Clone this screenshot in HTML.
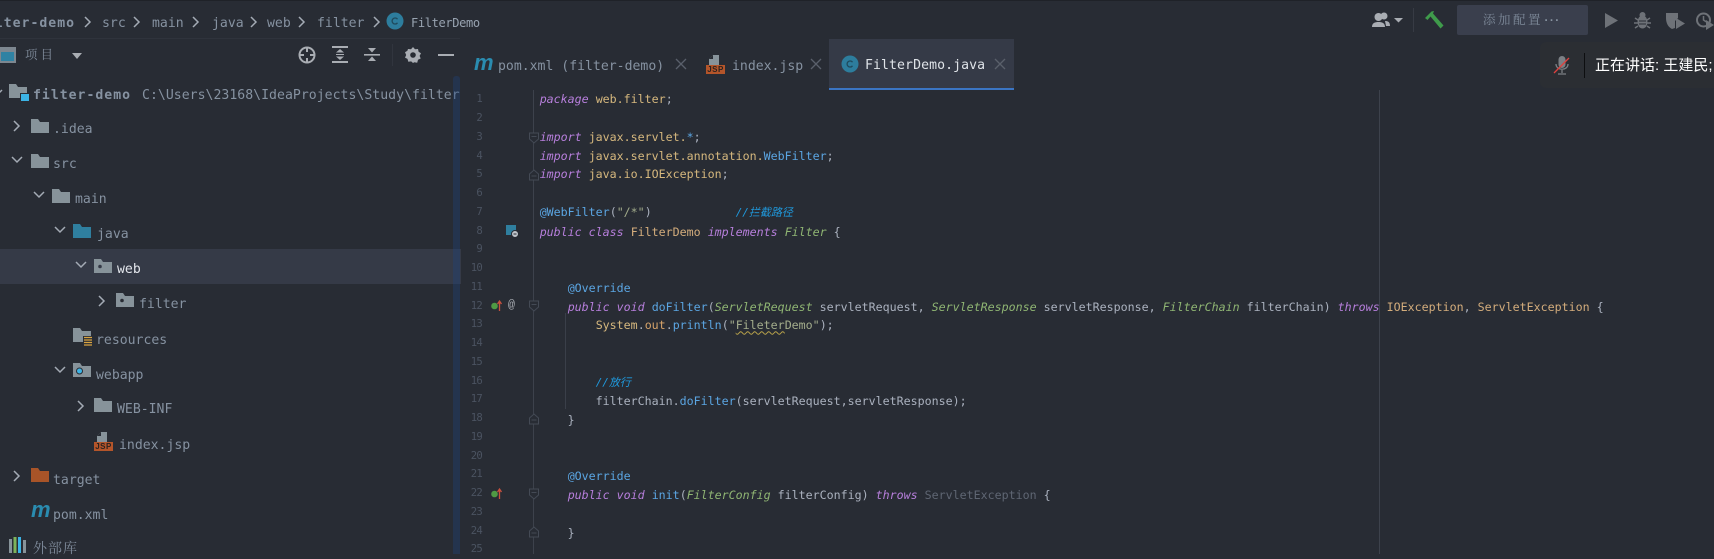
<!DOCTYPE html>
<html><head><meta charset="utf-8"><style>
html,body{margin:0;padding:0;width:1714px;height:554px;overflow:hidden;background:#282c34}
.a{position:absolute}
.t{position:absolute;font:13.15px/20px "DejaVu Sans Mono","Noto Sans CJK SC",monospace;color:#8692a1;white-space:pre}
.cn{font-family:"Noto Serif CJK SC","Noto Sans CJK SC",serif}
#code,#nums{position:absolute;top:90.3px;font:11.63px/18.75px "DejaVu Sans Mono","Noto Sans CJK SC",monospace;white-space:pre;color:#abb2bf}
#code{left:539.7px}
#nums{left:462px;width:20px;text-align:right;color:#4b5361;font-size:10.6px;letter-spacing:-.75px}
.k{color:#b77fdc;font-style:italic}.g{color:#8fb573;font-style:italic}.y{color:#d6b87e}.b{color:#5ba6e3}.o{color:#d6a36a}.c{color:#1f9ade;font-style:italic;font-size:11px}.m{color:#d4ad7c}.d{color:#5f6673}.s{color:#a3ad8c}
svg{position:absolute;overflow:visible}
</style></head><body>
<svg width="0" height="0" style="position:absolute"><defs>
<path id="f" d="M0 0h7l2 3h9v11H0z"/>
<path id="r" d="M0 0l5 5l-5 5" fill="none" stroke="#a4abb5" stroke-width="1.5"/>
<path id="dn" d="M0 0l5 5l5-5" fill="none" stroke="#a4abb5" stroke-width="1.5"/>
<g id="fs"><path d="M-4.500 -5h9v6l-4.500 4l-4.500-4z" fill="#282c34" stroke="#444a55"/><path d="M-2.500 -1.500h5" stroke="#444a55"/></g>
<g id="fe"><path d="M-4.500 5h9v-6l-4.500-4l-4.500 4z" fill="#282c34" stroke="#444a55"/><path d="M-2.500 1h5" stroke="#444a55"/></g>
</defs></svg>

<!-- top border -->
<div class="a" style="left:0;top:0;width:1714px;height:1px;background:#1f2228"></div>
<div class="a" style="left:0;top:38px;width:460px;height:1px;background:#2f333c"></div>

<!-- breadcrumb -->
<div class="t" style="left:-23px;top:14px;font-weight:bold;letter-spacing:1px">filter-demo</div>
<div class="t" style="left:102px;top:14px">src</div>
<div class="t" style="left:152px;top:14px">main</div>
<div class="t" style="left:212px;top:14px">java</div>
<div class="t" style="left:267px;top:14px">web</div>
<div class="t" style="left:317px;top:14px">filter</div>
<div class="t" style="left:411px;top:13px;color:#98a3b0;font-size:12px;letter-spacing:-.35px">FilterDemo</div>
<svg style="left:84px;top:16px" width="8" height="12"><use href="#r" x="1" y="1"/></svg>
<svg style="left:133px;top:16px" width="8" height="12"><use href="#r" x="1" y="1"/></svg>
<svg style="left:192px;top:16px" width="8" height="12"><use href="#r" x="1" y="1"/></svg>
<svg style="left:250px;top:16px" width="8" height="12"><use href="#r" x="1" y="1"/></svg>
<svg style="left:298px;top:16px" width="8" height="12"><use href="#r" x="1" y="1"/></svg>
<svg style="left:373px;top:16px" width="8" height="12"><use href="#r" x="1" y="1"/></svg>
<svg style="left:386px;top:12px" width="18" height="18"><circle cx="9" cy="9" r="8.5" fill="#2d7d9d"/><path d="M11.500 7.200A3 3 0 1 0 11.500 10.800" fill="none" stroke="#1f4a5c" stroke-width="1.300"/></svg>

<!-- project toolbar -->
<svg style="left:0;top:46px" width="18" height="18"><rect x="-3" y="1" width="19" height="16" fill="#7d8790"/><rect x="1" y="6" width="13" height="9" fill="#2f82a3"/></svg>
<div class="t cn" style="left:25px;top:44px;font-size:12.5px;letter-spacing:3px;color:#7f8b9b">项目</div>
<svg style="left:72px;top:53px" width="11" height="7"><path d="M0 0h10l-5 6z" fill="#a9adb3"/></svg>
<svg style="left:298px;top:46px" width="18" height="18" fill="none" stroke="#a9adb3" stroke-width="2"><circle cx="9" cy="9" r="7.5"/><path d="M9 1v5M9 12v5M1 9h5M12 9h5"/></svg>
<svg style="left:332px;top:46px" width="16" height="18" fill="#a9adb3"><rect x="0" y="0" width="16" height="2"/><rect x="0" y="15" width="16" height="2"/><path d="M8 3l4 3.500H4zM8 14l-4-3.500h8z"/><rect x="4" y="8" width="8" height="1"/></svg>
<svg style="left:364px;top:46px" width="16" height="18" fill="#a9adb3"><rect x="0" y="8" width="16" height="1.6"/><path d="M4 2h8L8 6.500zM8 10.500l4 4.500H4z"/></svg>
<div class="a" style="left:392px;top:44px;width:1px;height:22px;background:#31353e"></div>
<svg style="left:405px;top:47px" width="16" height="16"><path d="M8 0l2 2.300 3-.3.600 2.700 2.400 1.600-1.400 2.600 1.100 2.600-2.700 1.300-.8 2.900-2.900-.4L8 16l-1.800-1.600-2.900.4-.8-2.900L0 10.600l1.200-2.600L0 5.300l2.400-1.600L3 2l3 .3z" fill="#a9adb3"/><circle cx="8" cy="8" r="2.800" fill="#282c34"/></svg>
<div class="a" style="left:438px;top:54px;width:16px;height:2px;background:#a9adb3"></div>

<!-- selected row -->
<div class="a" style="left:0;top:249px;width:461px;height:35px;background:#353a47"></div>

<!-- tree -->
<svg style="left:-8px;top:90px" width="12" height="8"><use href="#dn" x="0" y="0"/></svg>
<svg style="left:9px;top:84px" width="20" height="18"><use href="#f" fill="#87939a"/><rect x="11" y="9" width="8" height="8" fill="#282c34"/><rect x="12" y="10" width="8" height="7" fill="#3cb4e6"/></svg>
<div class="t" style="left:33px;top:86px;font-weight:bold;letter-spacing:1px">filter-demo</div>
<div class="t" style="left:142px;top:86px;width:318px;overflow:hidden;letter-spacing:.03px">C:\Users\23168\IdeaProjects\Study\filter-demo</div>

<svg style="left:14px;top:121px" width="8" height="12"><use href="#r" y="0"/></svg>
<svg style="left:31px;top:119px" width="18" height="14"><use href="#f" fill="#87939a"/></svg>
<div class="t" style="left:53px;top:120px">.idea</div>

<svg style="left:12px;top:157px" width="12" height="8"><use href="#dn"/></svg>
<svg style="left:31px;top:154px" width="18" height="14"><use href="#f" fill="#87939a"/></svg>
<div class="t" style="left:53px;top:155px">src</div>

<svg style="left:34px;top:192px" width="12" height="8"><use href="#dn"/></svg>
<svg style="left:52px;top:189px" width="18" height="14"><use href="#f" fill="#87939a"/></svg>
<div class="t" style="left:75px;top:190px">main</div>

<svg style="left:55px;top:227px" width="12" height="8"><use href="#dn"/></svg>
<svg style="left:73px;top:224px" width="18" height="14"><use href="#f" fill="#2f7f9f"/></svg>
<div class="t" style="left:97px;top:225px">java</div>

<svg style="left:76px;top:262px" width="12" height="8"><use href="#dn"/></svg>
<svg style="left:94px;top:259px" width="18" height="14"><use href="#f" fill="#87939a"/><circle cx="6" cy="7.500" r="1.800" fill="#353a47"/></svg>
<div class="t" style="left:117px;top:260px;color:#e3e6ec">web</div>

<svg style="left:99px;top:296px" width="8" height="12"><use href="#r"/></svg>
<svg style="left:116px;top:293px" width="18" height="14"><use href="#f" fill="#87939a"/><circle cx="6" cy="7.500" r="1.800" fill="#282c34"/></svg>
<div class="t" style="left:139px;top:295px">filter</div>

<svg style="left:73px;top:328px" width="20" height="18"><use href="#f" fill="#87939a"/><rect x="10" y="8" width="9" height="10" fill="#282c34"/><path d="M11 9.500h8M11 12h8M11 14.500h8M11 17h8" stroke="#d9a441" stroke-width="1.200"/></svg>
<div class="t" style="left:96px;top:331px">resources</div>

<svg style="left:55px;top:367px" width="12" height="8"><use href="#dn"/></svg>
<svg style="left:73px;top:363px" width="18" height="14"><use href="#f" fill="#87939a"/><circle cx="6.500" cy="8" r="3.500" fill="#282c34"/><circle cx="6.500" cy="8" r="2.500" fill="#3cb4e6"/></svg>
<div class="t" style="left:96px;top:366px">webapp</div>

<svg style="left:78px;top:401px" width="8" height="12"><use href="#r"/></svg>
<svg style="left:94px;top:398px" width="18" height="14"><use href="#f" fill="#87939a"/></svg>
<div class="t" style="left:117px;top:400px">WEB-INF</div>

<svg style="left:94px;top:432px" width="19" height="19"><path d="M3 10V4l4-4h6v10z" fill="#87939a"/><path d="M3 4h4V0z" fill="#282c34"/><rect x="0" y="10" width="19" height="9" fill="#b4552a"/></svg>
<div class="a" style="left:94px;top:442px;width:19px;text-align:center;font:bold 8px/9px 'Liberation Sans',sans-serif;color:#2b2320;letter-spacing:.5px">JSP</div>
<div class="t" style="left:119px;top:436px">index.jsp</div>

<svg style="left:14px;top:471px" width="8" height="12"><use href="#r"/></svg>
<svg style="left:31px;top:468px" width="18" height="14"><use href="#f" fill="#a85428"/></svg>
<div class="t" style="left:53px;top:471px">target</div>

<div class="a" style="left:31px;top:496px;font:italic bold 22px/28px 'Liberation Sans',sans-serif;color:#2a8cb0">m</div>
<div class="t" style="left:53px;top:506px">pom.xml</div>

<svg style="left:9px;top:537px" width="19" height="16"><rect x="0" y="2" width="3" height="14" fill="#87939a"/><rect x="4.500" y="0" width="3" height="16" fill="#7db35a"/><rect x="9" y="0" width="3" height="16" fill="#3cb4e6"/><rect x="14" y="3" width="3" height="13" fill="#87939a"/></svg>
<div class="t cn" style="left:33px;top:538px;font-size:14px;letter-spacing:1px;color:#7f8b9b">外部库</div>

<!-- scrollbar -->
<div class="a" style="left:453px;top:76px;width:7px;height:478px;background:rgba(30,70,130,.35);border-radius:3px 3px 0 0"></div>

<!-- tabs -->
<div class="a" style="left:829px;top:39px;width:185px;height:49px;background:#353a47"></div>
<div class="a" style="left:829px;top:88px;width:185px;height:2px;background:#3b75c4"></div>

<div class="a" style="left:474px;top:49px;font:italic bold 22px/28px 'Liberation Sans',sans-serif;color:#2a8cb0">m</div>
<div class="t" style="left:498px;top:57px">pom.xml (filter-demo)</div>
<svg style="left:676px;top:59px" width="11" height="11" stroke="#5a606b" stroke-width="1.300"><path d="M0 0l10 10M10 0L0 10"/></svg>

<svg style="left:706px;top:55px" width="19" height="19"><path d="M3 10V4l4-4h6v10z" fill="#87939a"/><path d="M3 4h4V0z" fill="#282c34"/><rect x="0" y="10" width="19" height="9" fill="#b4552a"/></svg>
<div class="a" style="left:706px;top:65px;width:19px;text-align:center;font:bold 8px/9px 'Liberation Sans',sans-serif;color:#2b2320;letter-spacing:.5px">JSP</div>
<div class="t" style="left:732px;top:57px">index.jsp</div>
<svg style="left:811px;top:59px" width="11" height="11" stroke="#5a606b" stroke-width="1.300"><path d="M0 0l10 10M10 0L0 10"/></svg>

<svg style="left:841px;top:55px" width="18" height="18"><circle cx="9" cy="9" r="8.500" fill="#2d7d9d"/><path d="M11.500 7.200A3 3 0 1 0 11.500 10.800" fill="none" stroke="#1f4a5c" stroke-width="1.300"/></svg>
<div class="t" style="left:865px;top:56px;color:#dfe3e8;letter-spacing:.1px">FilterDemo.java</div>
<svg style="left:995px;top:59px" width="11" height="11" stroke="#5a606b" stroke-width="1.300"><path d="M0 0l10 10M10 0L0 10"/></svg>

<!-- editor lines -->
<div class="a" style="left:533px;top:90px;width:1px;height:464px;background:#3d424c"></div>
<div class="a" style="left:565px;top:313px;width:1px;height:96px;background:#3a3f49"></div>
<div class="a" style="left:1379px;top:90px;width:1px;height:464px;background:#3d424c"></div>

<!-- folds -->
<svg style="left:533.500px;top:0" width="1" height="1">
<use href="#fs" y="138"/><use href="#fe" y="175"/><use href="#fs" y="306"/><use href="#fe" y="419"/><use href="#fs" y="494"/><use href="#fe" y="532"/>
</svg>

<div id="nums">1
2
3
4
5
6
7
8
9
10
11
12
13
14
15
16
17
18
19
20
21
22
23
24
25</div>

<!-- gutter icons -->
<svg style="left:506px;top:225px" width="13" height="13"><rect width="10" height="10" fill="#2f7f9f"/><circle cx="9" cy="9" r="3.500" fill="#c0c5cb" stroke="#282c34"/><path d="M7.500 9h3" stroke="#282c34"/></svg>
<svg style="left:491px;top:300px" width="12" height="12"><circle cx="3.500" cy="6" r="3.300" fill="#4f9a44"/><path d="M8.500 11V2M6.500 4l2-3 2 3" fill="none" stroke="#c8503e" stroke-width="1.300"/></svg>
<div class="a" style="left:508px;top:297px;font:11.500px/18px 'Liberation Mono',monospace;color:#a9adb3">@</div>
<svg style="left:491px;top:488px" width="12" height="12"><circle cx="3.500" cy="6" r="3.300" fill="#4f9a44"/><path d="M8.500 11V2M6.500 4l2-3 2 3" fill="none" stroke="#c8503e" stroke-width="1.300"/></svg>

<div id="code"><span class="k">package</span> <span class="y">web.filter</span>;

<span class="k">import</span> <span class="y">javax.servlet.</span><span class="b">*</span>;
<span class="k">import</span> <span class="y">javax.servlet.annotation.</span><span class="b">WebFilter</span>;
<span class="k">import</span> <span class="y">java.io.IOException</span>;

<span class="b">@WebFilter</span>(<span class="s">"/*"</span>)            <span class="c">//拦截路径</span>
<span class="k">public class</span> <span class="m">FilterDemo</span> <span class="k">implements</span> <span class="g">Filter</span> {


    <span class="b">@Override</span>
    <span class="k">public void</span> <span class="b">doFilter</span>(<span class="g">ServletRequest</span> servletRequest, <span class="g">ServletResponse</span> servletResponse, <span class="g">FilterChain</span> filterChain) <span class="k">throws</span> <span class="m">IOException</span>, <span class="m">ServletException</span> {
        <span class="y">System</span>.<span class="o">out</span>.<span class="b">println</span>(<span class="s">"<span style="text-decoration:underline wavy #b8a24a 1px">Fileter</span>Demo"</span>);


        <span class="c">//放行</span>
        filterChain.<span class="b">doFilter</span>(servletRequest,servletResponse);
    }


    <span class="b">@Override</span>
    <span class="k">public void</span> <span class="b">init</span>(<span class="g">FilterConfig</span> filterConfig) <span class="k">throws</span> <span class="d">ServletException</span> {

    }
</div>

<!-- top right toolbar -->
<svg style="left:1372px;top:12px" width="32" height="16" fill="#a9adb3"><circle cx="6.500" cy="5" r="4"/><circle cx="12" cy="4" r="3.500"/><path d="M0 15c0-4 3-5 6.500-5s6.500 1 6.500 5zM13 9c3 0 5 1 5 5h-4z"/><path d="M22 6h9l-4.500 4.500z"/></svg>
<div class="a" style="left:1413px;top:8px;width:1px;height:24px;background:#373b44"></div>
<svg style="left:1425px;top:10px" width="20" height="20"><path d="M0 8L6.500 1.500 9 1 8 3.500l10.500 12-3 3L5.500 6.500 2.500 10z" fill="#3f9b4b"/></svg>
<div class="a" style="left:1457px;top:5px;width:131px;height:30px;background:#3a3f4d;border-radius:2px"></div>
<div class="t cn" style="left:1483px;top:9px;font-size:12.500px;letter-spacing:2.500px;line-height:20px;color:#7f8b9b">添加配置</div>
<div class="a" style="left:1543px;top:6px;font:17px/20px 'Liberation Sans',sans-serif;color:#8a95a3">…</div>
<svg style="left:1605px;top:13px" width="14" height="15"><path d="M0 0l13 7.500L0 15z" fill="#6e7278"/></svg>
<svg style="left:1634px;top:11px" width="17" height="18" fill="#6e7278"><ellipse cx="8.500" cy="11" rx="5" ry="6.500"/><circle cx="8.500" cy="4" r="3"/><path d="M1 7l3 2M16 7l-3 2M0 12h4M13 12h4M1 17l3-2M16 17l-3-2" stroke="#6e7278" stroke-width="1.500"/><path d="M5 10h7M5 13h7" stroke="#282c34"/></svg>
<svg style="left:1666px;top:12px" width="20" height="18"><path d="M0 1h12v5l-3 3v7l-3 1C2 15 0 11 0 6z" fill="#6e7278"/><path d="M10 6l9 5.500-9 5.500z" fill="#6e7278"/></svg>
<svg style="left:1696px;top:12px" width="20" height="18"><circle cx="7.500" cy="8" r="6.500" fill="none" stroke="#6e7278" stroke-width="2"/><path d="M7.500 4v4l3 2" fill="none" stroke="#6e7278" stroke-width="1.500"/><path d="M10 8l8 5-8 5z" fill="#6e7278"/></svg>

<!-- meeting overlay -->
<div class="a" style="left:1540px;top:42px;width:174px;height:46px;background:#2b2e33;border-radius:6px 0 0 6px"></div>
<svg style="left:1554px;top:56px" width="16" height="19"><rect x="4.500" y="0" width="7" height="12" rx="3.500" fill="#7c8085"/><path d="M2 8c0 7 12 7 12 0M8 14v3M4 18h8" fill="none" stroke="#7c8085" stroke-width="1.300"/><path d="M0 17L15 2" stroke="#e0413e" stroke-width="1.300"/></svg>
<div class="a" style="left:1584px;top:53px;width:1px;height:25px;background:#0d0e10"></div>
<div class="a" style="left:1595px;top:54px;font:15px/23px 'Liberation Sans','Noto Sans CJK SC',sans-serif;color:#fff;white-space:pre">正在讲话: 王建民;</div>
</body></html>
